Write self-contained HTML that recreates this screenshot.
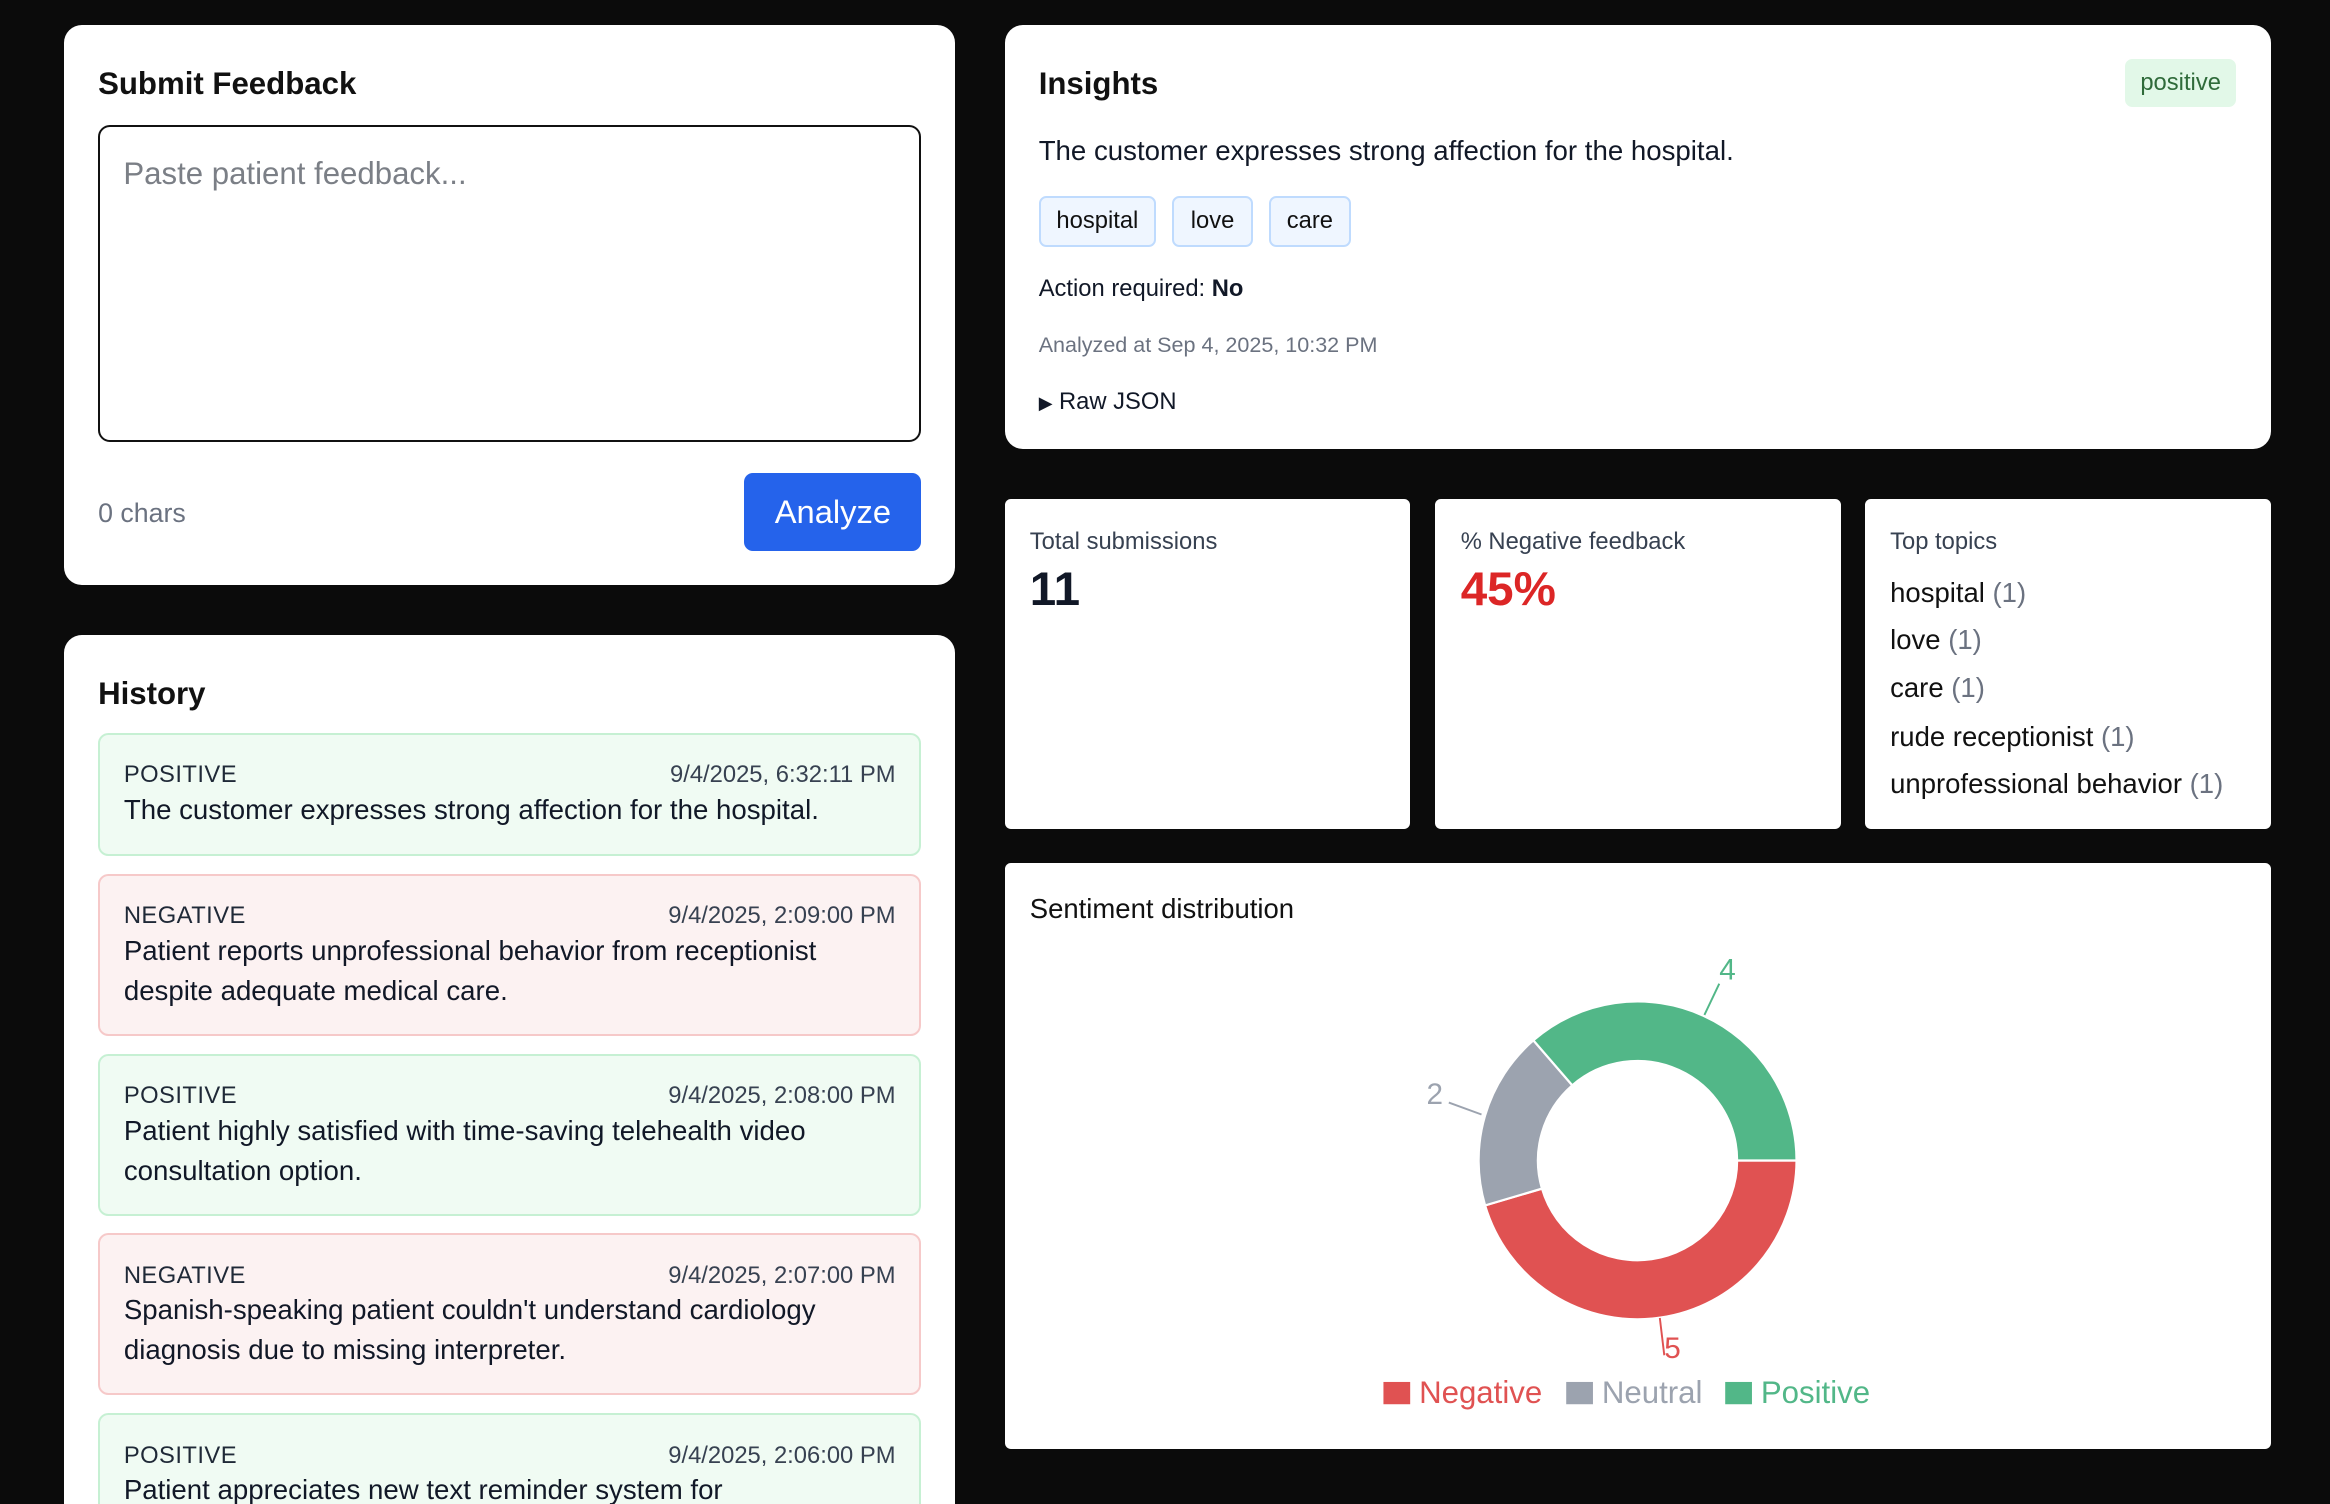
<!DOCTYPE html>
<html><head><meta charset="utf-8"><style>
html{margin:0;padding:0;width:2330px;height:1504px;overflow:hidden;background:#0b0b0b}
body{margin:0;padding:0;width:1568px;height:1012px;overflow:hidden;background:#0b0b0b;zoom:1.48597;font-family:"Liberation Sans",Arial,sans-serif;color:#111827;position:relative}
.card{position:absolute;background:#fff;border-radius:12px}
.abs{position:absolute;white-space:nowrap}
h2{position:absolute;margin:0;font-size:21px;font-weight:bold;color:#111;line-height:1}
.item{position:absolute;left:66px;width:554px;border-radius:7px;box-sizing:border-box}
.pos{background:#f0fbf3;border:1.5px solid #c6f0d3}
.neg{background:#fcf2f2;border:1.5px solid #f6c9c9}
.lab{position:absolute;left:16px;top:18px;font-size:16px;color:#1f2937;letter-spacing:.3px}
.dt{position:absolute;right:16px;top:18px;font-size:16px;color:#374151}
.txt{position:absolute;left:16px;top:37px;width:520px;font-size:18.6px;line-height:27px;color:#111827}
.tag{position:absolute;top:115px;height:34px;box-sizing:border-box;background:#eff6ff;border:1.5px solid #bfdbfe;border-radius:5px;font-size:16px;line-height:31px;text-align:center;color:#111}
.stat{position:absolute;top:336px;height:222px;width:273px;background:#fff;border-radius:4px}
.sl{position:absolute;left:17px;top:19px;font-size:16px;color:#374151}
.sv{position:absolute;left:17px;top:42px;font-size:32px;font-weight:bold}
.tp{position:absolute;left:17px;font-size:18.5px;color:#111}
.tp span{color:#6b7280}
</style></head><body>
<div class="card" style="left:43px;top:17px;width:600px;height:377px">
<h2 style="left:23px;top:29px">Submit Feedback</h2>
<div class="abs" style="left:23px;top:67px;width:551px;height:211px;border:1.5px solid #111;border-radius:8px"></div>
<div class="abs" style="left:40px;top:88px;font-size:21px;color:#7b7f86">Paste patient feedback...</div>
<div class="abs" style="left:23px;top:318px;font-size:18px;color:#6b7280">0 chars</div>
<div class="abs" style="left:458px;top:301px;width:119px;height:53px;background:#2563eb;border-radius:6px;color:#fff;font-size:22px;line-height:53px;text-align:center">Analyze</div>
</div>
<div class="card" style="left:43px;top:427px;width:600px;height:600px">
<h2 style="left:23px;top:29px">History</h2>
</div>
<div class="item pos" style="top:493px;height:83px"><div class="lab">POSITIVE</div><div class="dt">9/4/2025, 6:32:11 PM</div><div class="txt">The customer expresses strong affection for the hospital.</div></div>
<div class="item neg" style="top:588px;height:109px"><div class="lab">NEGATIVE</div><div class="dt">9/4/2025, 2:09:00 PM</div><div class="txt">Patient reports unprofessional behavior from receptionist despite adequate medical care.</div></div>
<div class="item pos" style="top:709px;height:109px"><div class="lab">POSITIVE</div><div class="dt">9/4/2025, 2:08:00 PM</div><div class="txt">Patient highly satisfied with time-saving telehealth video consultation option.</div></div>
<div class="item neg" style="top:830px;height:109px"><div class="lab">NEGATIVE</div><div class="dt">9/4/2025, 2:07:00 PM</div><div class="txt">Spanish-speaking patient couldn't understand cardiology diagnosis due to missing interpreter.</div></div>
<div class="item pos" style="top:951px;height:70px"><div class="lab">POSITIVE</div><div class="dt">9/4/2025, 2:06:00 PM</div><div class="txt">Patient appreciates new text reminder system for appointments.</div></div>

<div class="card" style="left:676px;top:17px;width:852px;height:285px">
<h2 style="left:23px;top:29px">Insights</h2>
<div class="abs" style="left:754px;top:23px;width:75px;height:32px;background:#e2f8e8;border-radius:5px;color:#2f6b3a;font-size:16px;line-height:32px;text-align:center">positive</div>
<div class="abs" style="left:23px;top:74px;font-size:18.6px">The customer expresses strong affection for the hospital.</div>
<div class="tag" style="left:23px;width:79px">hospital</div>
<div class="tag" style="left:113px;width:54px">love</div>
<div class="tag" style="left:178px;width:55px">care</div>
<div class="abs" style="left:23px;top:168px;font-size:16px">Action required: <b>No</b></div>
<div class="abs" style="left:23px;top:207px;font-size:14.5px;color:#6b7280">Analyzed at Sep 4, 2025, 10:32 PM</div>
<div class="abs" style="left:23px;top:244px;font-size:16px"><span style="font-size:12px">&#9654;&#xFE0E;</span> Raw JSON</div>
</div>

<div class="stat" style="left:676px"><div class="sl">Total submissions</div><div class="sv">11</div></div>
<div class="stat" style="left:966px"><div class="sl">% Negative feedback</div><div class="sv" style="color:#dc2626">45%</div></div>
<div class="stat" style="left:1255px"><div class="sl">Top topics</div>
<div class="tp" style="top:52px">hospital <span>(1)</span></div>
<div class="tp" style="top:84px">love <span>(1)</span></div>
<div class="tp" style="top:116px">care <span>(1)</span></div>
<div class="tp" style="top:149px">rude receptionist <span>(1)</span></div>
<div class="tp" style="top:181px">unprofessional behavior <span>(1)</span></div>
</div>

<div class="card" style="left:676px;top:581px;width:852px;height:394px;border-radius:4px">
<div class="abs" style="left:17px;top:20px;font-size:18.5px;color:#111">Sentiment distribution</div>
</div>
<svg class="abs" style="left:0;top:0" width="1568" height="1012" viewBox="0 0 1568 1012">
<g stroke="#fff" stroke-width="1.5">
<path d="M1209,781 A107,107 0 0 1 999.4,811.2 L1037.7,799.9 A67,67 0 0 0 1169,781 Z" fill="#e05252"/>
<path d="M999.4,811.2 A107,107 0 0 1 1031.9,700.1 L1058.1,730.4 A67,67 0 0 0 1037.7,799.9 Z" fill="#9ca3af"/>
<path d="M1031.9,700.1 A107,107 0 0 1 1209,781 L1169,781 A67,67 0 0 0 1058.1,730.4 Z" fill="#52b788"/>
</g>
<path d="M1147,683 L1157,662" stroke="#52b788" stroke-width="1.3"/>
<path d="M997,750 L975,742" stroke="#9ca3af" stroke-width="1.3"/>
<path d="M1117,887 L1120,912" stroke="#e05252" stroke-width="1.3"/>
<g font-family="Liberation Sans,Arial,sans-serif" font-size="20">
<text x="1157" y="659" fill="#52b788">4</text>
<text x="960" y="743" fill="#9ca3af">2</text>
<text x="1120" y="914" fill="#e05252">5</text>
</g>
<g font-family="Liberation Sans,Arial,sans-serif" font-size="21">
<rect x="931" y="930" width="18" height="15" fill="#e05252"/><text x="955" y="944" fill="#e05252">Negative</text>
<rect x="1054" y="930" width="18" height="15" fill="#9ca3af"/><text x="1078" y="944" fill="#9ca3af">Neutral</text>
<rect x="1161" y="930" width="18" height="15" fill="#52b788"/><text x="1185" y="944" fill="#52b788">Positive</text>
</g>
</svg>
</body></html>
